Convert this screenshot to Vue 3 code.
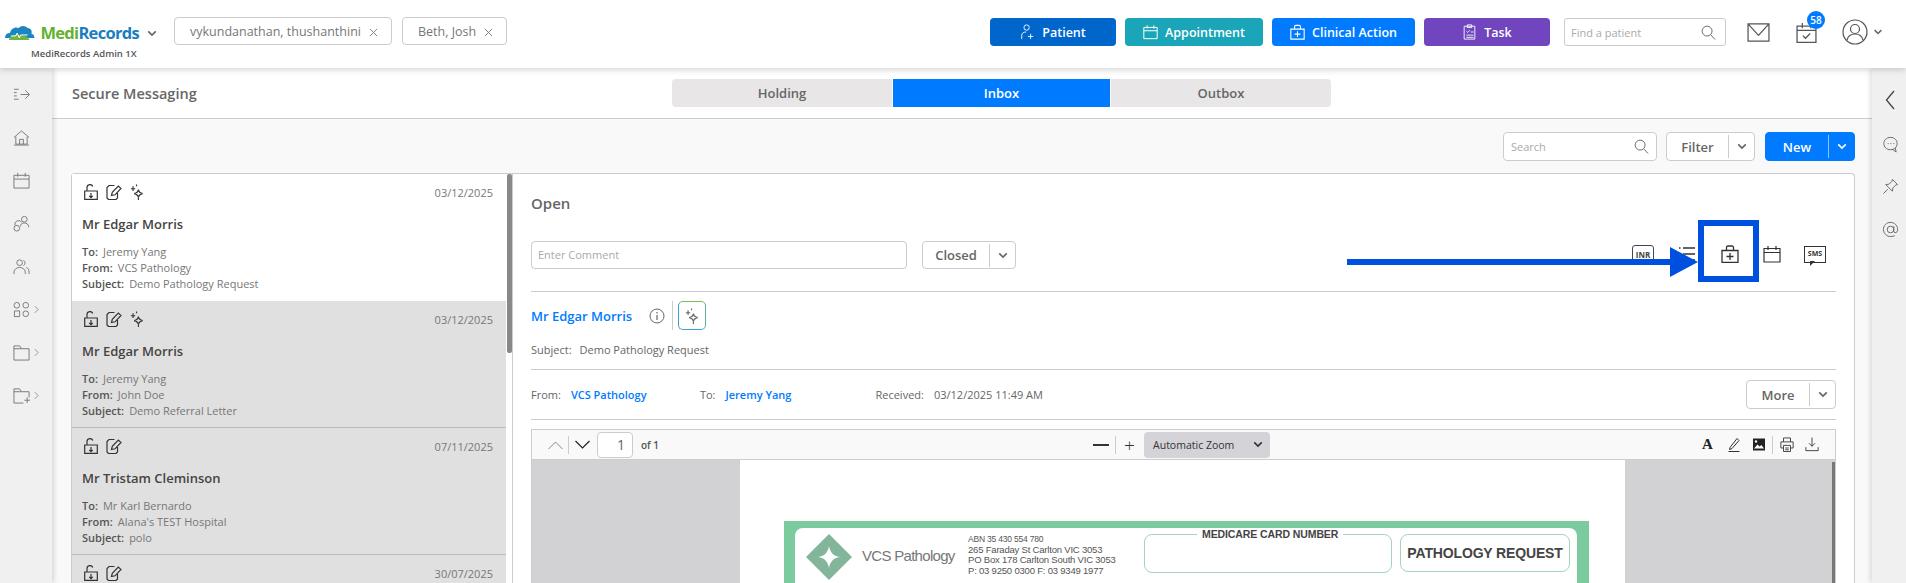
<template>
  <div class="page">
    <!-- shared icons -->
    <svg class="sprite" width="0" height="0">
      <symbol id="i-lock" viewBox="0 0 14 16">
        <path d="M.7 7h12.600v8.300H.7zM3 7V3.500a3 3 0 0 1 5.800-1M7 9v4.500M5.200 11.800 7 13.600l1.800-1.800" fill="none" stroke="currentColor" stroke-width="1.200" />
      </symbol>
      <symbol id="i-note" viewBox="0 0 16 16">
        <path d="M8.500 1.500H3L1 3.500v10.500l1.500 1.500h7.500l1.500-1.500V9M5.500 11.500l.8-3.200 6-6.300 2.700 2.500-6 6.300z" fill="none" stroke="currentColor" stroke-width="1.200" />
      </symbol>
      <symbol id="i-spark" viewBox="0 0 14 17">
        <path d="M8.500 6c.4 2.500 1.300 3.600 4.500 4.200-3.200.6-4.100 1.800-4.500 4.300-.4-2.500-1.300-3.700-4.500-4.300 3.200-.6 4.100-1.700 4.500-4.200zM2.800 2.500v5M.5 5h4.600M6.500 .5v2M8.500 15v2" fill="none" stroke="currentColor" stroke-width="1.200" />
      </symbol>
      <symbol id="i-chev" viewBox="0 0 12 8">
        <path d="M1.500 1.500 6 6l4.500-4.500" fill="none" stroke="currentColor" stroke-width="2" />
      </symbol>
      <symbol id="i-search" viewBox="0 0 16 16">
        <circle cx="6.500" cy="6.500" r="5.300" fill="none" stroke="currentColor" />
        <path d="m10.500 10.500 4.500 5" fill="none" stroke="currentColor" />
      </symbol>
      <symbol id="i-cal" viewBox="0 0 18 18">
        <path d="M1 3.500h16v13.500H1zM1 7.500h16M5 1v4M13 1v4" fill="none" stroke="currentColor" stroke-width="1.200" />
      </symbol>
      <symbol id="i-case" viewBox="0 0 18 18">
        <path d="M1 5.500h16v12H1zM5.500 5.500V2.500a1.500 1.500 0 0 1 1.500-1.500h4a1.500 1.500 0 0 1 1.500 1.500v3M9 8v7M5.500 11.500h7" fill="none" stroke="currentColor" stroke-width="1.300" />
      </symbol>
      <symbol id="i-caret" viewBox="0 0 6 10">
        <path d="m1 1 4 4-4 4" fill="none" stroke="currentColor" />
      </symbol>
    </svg>

    <header class="topbar">
      <div class="brand">
        <div class="logo">
          <svg class="cloud" viewBox="0 0 32 20">
            <path d="M1 15c0-3 2-5 5-5 1-4 5-7 9-5 2-3 7-3 9 0 3 0 5 3 4 6 2 0 3 2 3 4z" fill="#1c86c2" />
            <path d="M5 17c1-4 6-6 10-5 5 0 9 1 11 5z" fill="#6fb544" />
            <path d="M7 13h5l1.500-3 2 5 1.500-3h7" fill="none" stroke="#fff" />
          </svg>
          <span class="logo-text"><b class="medi">Medi</b><b class="records">Records</b></span>
        </div>
        <div class="logo-sub">MediRecords Admin 1X</div>
      </div>
      <svg class="brand-chev"><use href="#i-chev" /></svg>

      <div v-for="c in chips" :key="c" class="chip">
        {{ c }}
        <svg class="chip-x" viewBox="0 0 10 10"><path d="m1 1 8 8M9 1 1 9" stroke="#777" /></svg>
      </div>

      <div class="top-right">
        <button class="act patient">
          <svg class="act-ico" viewBox="0 0 16 18"><circle cx="7" cy="4" r="3" fill="none" stroke="#fff" /><path d="M1.500 17v-4.500c0-2 2-3.500 5-3.500M11.500 11v6M8.500 14h6" fill="none" stroke="#fff" /></svg>
          Patient
        </button>
        <button class="act appt">
          <svg class="act-ico"><use href="#i-cal" /></svg>
          Appointment
        </button>
        <button class="act clinical">
          <svg class="act-ico"><use href="#i-case" /></svg>
          Clinical Action
        </button>
        <button class="act task">
          <svg class="act-ico" viewBox="0 0 14 18"><path d="M1 2.500h12V17H1zM4.500 1h5v3h-5zM3.500 8l1.500 1.500L7.500 7M8.500 9h3M3.500 12.500h8M3.500 15h8" fill="none" stroke="#fff" /></svg>
          Task
        </button>
        <div class="find">
          <span>Find a patient</span>
          <svg class="find-ico"><use href="#i-search" /></svg>
        </div>
        <svg class="mail" viewBox="0 0 24 20"><path d="M1 1h22v18H1zM1 1l11 12L23 1" fill="none" stroke="#555" stroke-width="1.300" /></svg>
        <div class="tasks">
          <svg class="tasks-ico" viewBox="0 0 20 20"><path d="M1 4h18v15.500H1zM1 8h18M6 1v5M14 1v5M6.500 13l2.500 2.500 4.500-4.500" fill="none" stroke="#555" stroke-width="1.200" /></svg>
          <span class="badge">58</span>
        </div>
        <svg class="user" viewBox="0 0 26 26"><circle cx="13" cy="13" r="12" fill="none" stroke="#555" stroke-width="1.200" /><circle cx="13" cy="10" r="4.500" fill="none" stroke="#555" stroke-width="1.200" /><path d="M5 21c1-4 4-6 8-6s7 2 8 6" fill="none" stroke="#555" stroke-width="1.200" /></svg>
        <svg class="user-chev"><use href="#i-chev" /></svg>
      </div>
    </header>

    <div class="body">
      <nav class="rail">
        <div v-for="n in railIcons" :key="n.d" class="rail-item">
          <svg class="rail-ico" viewBox="0 0 18 18"><path :d="n.d" fill="none" stroke="#777" /></svg>
          <svg v-if="n.more" class="rail-more"><use href="#i-caret" /></svg>
        </div>
      </nav>

      <main class="main">
        <div class="titlebar">
          <h1 class="title">Secure Messaging</h1>
          <div class="tabs">
            <div class="tab">Holding</div>
            <div class="tab on">Inbox</div>
            <div class="tab">Outbox</div>
          </div>
        </div>

        <div class="tools">
          <div class="search">
            <span>Search</span>
            <svg class="find-ico"><use href="#i-search" /></svg>
          </div>
          <div class="split filter">
            <span class="split-label">Filter</span>
            <span class="split-arrow"><svg><use href="#i-chev" /></svg></span>
          </div>
          <div class="split new">
            <span class="split-label">New</span>
            <span class="split-arrow"><svg><use href="#i-chev" /></svg></span>
          </div>
        </div>

        <section class="panel">
          <div class="list">
            <div class="scroll-thumb"></div>
            <article v-for="(m, i) in messages" :key="i" class="msg" :class="{ sel: i === 0 }">
              <div class="msg-top">
                <svg class="mi lock"><use href="#i-lock" /></svg>
                <svg class="mi note"><use href="#i-note" /></svg>
                <svg v-if="m.ai" class="mi spark"><use href="#i-spark" /></svg>
                <span class="msg-date">{{ m.date }}</span>
              </div>
              <template v-if="m.name">
                <div class="msg-name">{{ m.name }}</div>
                <div class="msg-lines">
                  <div><b>To:</b>{{ m.to }}</div>
                  <div><b>From:</b>{{ m.from }}</div>
                  <div><b>Subject:</b>{{ m.subject }}</div>
                </div>
              </template>
            </article>
          </div>

          <div class="detail">
            <div class="open">Open</div>
            <div class="comment-row">
              <div class="comment">Enter Comment</div>
              <div class="split closed">
                <span class="split-label">Closed</span>
                <span class="split-arrow"><svg><use href="#i-chev" /></svg></span>
              </div>
              <div class="row-icons">
                <span class="inr">INR</span>
                <svg class="ri list-ico" viewBox="0 0 18 18"><path d="M1 3h1.500M5 3h12M1 9h1.500M5 9h12M1 15h1.500M5 15h12" stroke="#333" stroke-width="1.500" /></svg>
                <svg class="ri case-ico"><use href="#i-case" /></svg>
                <svg class="ri cal-ico"><use href="#i-cal" /></svg>
                <span class="sms">SMS</span>
              </div>
            </div>

            <div class="who">
              <a class="patient-link">Mr Edgar Morris</a>
              <svg class="info" viewBox="0 0 16 16"><circle cx="8" cy="8" r="7" fill="none" stroke="#666" /><path d="M8 7v5M8 4v1.500" stroke="#666" stroke-width="1.200" /></svg>
              <span class="who-sep"></span>
              <span class="ai-btn"><svg><use href="#i-spark" /></svg></span>
            </div>
            <div class="subject"><span>Subject:</span>Demo Pathology Request</div>

            <div class="meta">
              <span class="meta-l">From:</span><a class="meta-a from">VCS Pathology</a>
              <span class="meta-l">To:</span><a class="meta-a to">Jeremy Yang</a>
              <span class="meta-l">Received:</span><span class="meta-v">03/12/2025 11:49 AM</span>
              <div class="split more">
                <span class="split-label">More</span>
                <span class="split-arrow"><svg><use href="#i-chev" /></svg></span>
              </div>
            </div>

            <div class="viewer">
              <div class="vbar">
                <svg class="v-nav up" viewBox="0 0 16 10"><path d="m1 9 7-7 7 7" fill="none" stroke="#888" /></svg>
                <span class="v-sep"></span>
                <svg class="v-nav" viewBox="0 0 16 10"><path d="m1 1 7 7 7-7" fill="none" stroke="#222" stroke-width="1.200" /></svg>
                <span class="v-page">1</span>
                <span class="v-of">of 1</span>
                <span class="v-minus"></span>
                <span class="v-sep"></span>
                <span class="v-plus">+</span>
                <div class="v-zoom">Automatic Zoom<svg><use href="#i-chev" /></svg></div>
                <div class="v-right">
                  <span class="v-a">A</span>
                  <svg class="v-i pencil" viewBox="0 0 14 16"><path d="M3 11 10 2l2 2-7 8-2.500 1zM1.500 15h11" fill="none" stroke="#333" /></svg>
                  <svg class="v-i image" viewBox="0 0 14 14"><path d="M1 1h12v12H1z" fill="#222" /><path d="m2 11 3.500-4 2 2 2-1.500L12 11z" fill="#fff" /><circle cx="4" cy="4" r="1.200" fill="#fff" /></svg>
                  <span class="v-sep"></span>
                  <svg class="v-i print" viewBox="0 0 16 18"><path d="M4 6V1.500h8V6M1 6h14v7h-3M4 13H1V6M4 10h8v7H4zM6 13h4M6 15h4" fill="none" stroke="#333" /></svg>
                  <svg class="v-i save" viewBox="0 0 16 18"><path d="M8 1v10M4.500 7.500 8 11l3.500-3.500M1 12v4h14v-4" fill="none" stroke="#333" /></svg>
                </div>
              </div>
              <div class="vbody">
                <div class="pdf-page">
                  <div class="form">
                    <div class="form-in">
                      <svg class="diamond" viewBox="0 0 46 46"><path fill-rule="evenodd" d="M23 0l23 23-23 23L0 23zM23 12c1 6 4 10 11 11-7 1-10 5-11 11-1-6-4-10-11-11 7-1 10-5 11-11z" fill="#82b59a" /></svg>
                      <div class="vcs">VCS Pathology</div>
                      <div class="addr">
                        <div class="abn">ABN 35 430 554 780</div>
                        <div>265 Faraday St Carlton VIC 3053</div>
                        <div>PO Box 178 Carlton South VIC 3053</div>
                        <div>P: 03 9250 0300 F: 03 9349 1977</div>
                      </div>
                      <div class="medicare"><span>MEDICARE CARD NUMBER</span></div>
                      <div class="req">PATHOLOGY REQUEST</div>
                    </div>
                  </div>
                </div>
                <div class="v-thumb"></div>
              </div>
            </div>
          </div>

          <!-- annotation drawn over the screenshot -->
          <div class="mark-line"></div>
          <div class="mark-head"></div>
          <div class="mark-box"></div>
        </section>
      </main>

      <aside class="rail-right">
        <svg class="rr-back" viewBox="0 0 10 20"><path d="M9 1 1.500 10 9 19" fill="none" stroke="#444" stroke-width="1.300" /></svg>
        <svg class="rr" viewBox="0 0 18 18"><path d="M9 1.500c4.500 0 7 3 7 6.500s-2.500 6.500-7 6.500c-4.500 0-7-3-7-6.500s2.500-6.500 7-6.500zM11 14l4 3-1-4.500" fill="none" stroke="#666" /><path d="M6 8h1M9 8h1M12 8h1" stroke="#666" /></svg>
        <svg class="rr" viewBox="0 0 18 18"><path d="m11 1.500 5.500 5.500-2 .5-3 3-.5 3.500-7-7 3.500-.5 3-3zM6 12l-4.500 4.500" fill="none" stroke="#666" /></svg>
        <svg class="rr" viewBox="0 0 18 18"><circle cx="9" cy="9" r="3.500" fill="none" stroke="#666" /><path d="M12.500 5.500V11c0 2 3.500 2 4-1 .5-5-3-8.500-7.500-8.500S1.500 5 1.500 9s3.500 7.500 7.500 7.500c2 0 3.500-.5 4.500-1" fill="none" stroke="#666" /></svg>
      </aside>
    </div>
  </div>
</template>

<script setup>
const chips = ['vykundanathan, thushanthini', 'Beth, Josh'];

const railIcons = [
  { d: 'M1 3.500h5M1 7h3M1 10.500h3M1 14h5M8 9h9M13 4.500 17.500 9 13 13.500' },
  { d: 'M1 9 9 2l8 7M3 8v8h12V8M7 16v-5h4v5M1 17h16' },
  { d: 'M1 3.500h16V17H1zM1 7.500h16M5 1v4M13 1v4' },
  { d: 'M9 4.500a3 3 0 1 0 6 0 3 3 0 1 0-6 0M2 11a4 4 0 0 1 7-3.500M16.500 13v-1c0-2-2-3.500-4.500-3.500S8 9.500 8 12M1 14a3 3 0 1 0 6 0 3 3 0 1 0-6 0' },
  { d: 'M4 5a3 3 0 1 0 6 0 3 3 0 1 0-6 0M1 17v-2c0-3 3-5 6-5s6 2 6 5v2M11 2.500a3 3 0 0 1 0 5.500M14 10c2 .8 3 2.500 3 5v2' },
  { d: 'M1 4.500a3 3 0 1 0 6 0 3 3 0 1 0-6 0M10.500 4.500a3 3 0 1 0 6 0 3 3 0 1 0-6 0M1.500 10.500h5.500v6H1.500zM10.500 13.500a3 3 0 1 0 6 0 3 3 0 1 0-6 0', more: true },
  { d: 'M1 2h6l2 3h8v12H1zM1 5h8', more: true },
  { d: 'M1 2h6l2 3h8v6M11 17H1V2M1 5h8M12 14h6M15 11v6', more: true },
];

// the fourth row is cut by the window, only its icons and date are in view
const messages = [
  { date: '03/12/2025', name: 'Mr Edgar Morris', to: 'Jeremy Yang', from: 'VCS Pathology', subject: 'Demo Pathology Request', ai: true },
  { date: '03/12/2025', name: 'Mr Edgar Morris', to: 'Jeremy Yang', from: 'John Doe', subject: 'Demo Referral Letter', ai: true },
  { date: '07/11/2025', name: 'Mr Tristam Cleminson', to: 'Mr Karl Bernardo', from: "Alana's TEST Hospital", subject: 'polo' },
  { date: '30/07/2025' },
];
</script>

<style>
html,
body {
  margin: 0;
  overflow: hidden;
  background: #fff;
}
</style>

<style scoped>
* {
  box-sizing: border-box;
}

.page {
  height: 583px;
  width: 1906px;
  display: flex;
  flex-direction: column;
  overflow: hidden;
  font-family: 'Open Sans', 'Noto Sans', sans-serif;
  color: #666;
}

.sprite {
  position: absolute;
}

/* top bar */
.topbar {
  height: 68px;
  flex: none;
  display: flex;
  align-items: flex-start;
  padding-left: 4px;
  background: #fff;
  box-shadow: 0 2px 6px rgba(0, 0, 0, 0.16);
  position: relative;
  z-index: 3;
}

.brand {
  width: 135px;
  margin-top: 22px;
}

.logo {
  display: flex;
  align-items: center;
}

.cloud {
  width: 33px;
  height: 20px;
  margin-right: 5px;
}

.logo-text {
  font-size: 16.5px;
  letter-spacing: -0.7px;
  line-height: 22px;
}

.medi {
  color: #62b22f;
}

.records {
  color: #1b7ec0;
}

.logo-sub {
  font-size: 9.5px;
  font-weight: 600;
  line-height: 12px;
  margin: 4px 0 0 27px;
  white-space: nowrap;
  color: #555;
}

.brand-chev {
  width: 10px;
  height: 7px;
  margin: 30px 17px 0 8px;
  color: #666;
}

.chip {
  height: 28px;
  margin: 17px 10px 0 0;
  display: flex;
  align-items: center;
  padding: 0 13px 0 15px;
  border: 1px solid #ccc;
  border-radius: 4px;
  font-size: 12.5px;
  color: #777;
  white-space: nowrap;
}

.chip-x {
  width: 9px;
  height: 9px;
  margin-left: 8px;
  margin-top: 2px;
}

.top-right {
  margin: 18px 0 0 auto;
  display: flex;
  align-items: center;
}

.act {
  height: 28px;
  border: 0;
  border-radius: 4px;
  margin-right: 9px;
  display: flex;
  align-items: center;
  justify-content: center;
  gap: 7px;
  padding: 0;
  font: 600 12.5px 'Open Sans', sans-serif;
  color: #fff;
}

.act-ico {
  width: 15px;
  height: 16px;
  color: #fff;
}

.patient {
  width: 126px;
  background: #0066cc;
}

.appt {
  width: 138px;
  background: #1aa5b8;
}

.clinical {
  width: 143px;
  background: #007bff;
}

.task {
  width: 126px;
  background: #7045bd;
  margin-right: 14px;
}

.find {
  width: 162px;
  height: 28px;
  border: 1px solid #ccc;
  border-radius: 3px;
  display: flex;
  align-items: center;
  justify-content: space-between;
  padding: 0 9px 0 6px;
  font-size: 11px;
  color: #aaa;
}

.find-ico {
  width: 15px;
  height: 15px;
  color: #666;
}

.mail {
  width: 23px;
  height: 19px;
  margin-left: 21px;
}

.tasks {
  position: relative;
  margin-left: 26px;
  height: 20px;
}

.tasks-ico {
  width: 21px;
  height: 21px;
  display: block;
}

.badge {
  position: absolute;
  left: 11px;
  top: -11px;
  width: 18px;
  height: 18px;
  border-radius: 50%;
  background: #007bff;
  color: #fff;
  font-size: 10px;
  font-weight: 600;
  line-height: 18px;
  text-align: center;
}

.user {
  width: 26px;
  height: 26px;
  margin-left: 25px;
}

.user-chev {
  width: 10px;
  height: 6px;
  margin: 0 23px 0 5px;
  color: #666;
}

/* layout */
.body {
  flex: 1;
  min-height: 0;
  display: flex;
}

.rail {
  width: 52px;
  flex: none;
  padding-top: 5px;
  background: #f0f0f0;
  box-shadow: 2px 0 5px rgba(0, 0, 0, 0.14);
  position: relative;
  z-index: 2;
}

.rail-item {
  height: 43px;
  display: flex;
  align-items: center;
  padding-left: 13px;
}

.rail-ico {
  width: 17px;
  height: 17px;
}

.rail-more {
  width: 5px;
  height: 9px;
  margin-left: 4px;
  color: #888;
}

.main {
  flex: 1;
  min-width: 0;
  display: flex;
  flex-direction: column;
  background: #f9f9f9;
}

.titlebar {
  height: 51px;
  flex: none;
  background: #fff;
  border-bottom: 1px solid #ccc;
  display: flex;
  align-items: center;
  padding-left: 20px;
  position: relative;
}

.title {
  margin: 0;
  width: 600px;
  font-size: 14.5px;
  font-weight: 600;
  color: #666;
}

.tabs {
  display: flex;
  gap: 1px;
}

.tab {
  width: 220px;
  height: 28px;
  background: #e8e6e6;
  font-size: 13px;
  font-weight: 600;
  line-height: 28px;
  text-align: center;
  color: #666;
}

.tab:first-child {
  border-radius: 4px 0 0 4px;
}

.tab:last-child {
  border-radius: 0 4px 4px 0;
}

.tab.on {
  width: 217px;
  background: #007bff;
  color: #fff;
}

.tools {
  height: 54px;
  flex: none;
  display: flex;
  justify-content: flex-end;
  align-items: flex-start;
  gap: 9px;
  padding: 13px 17px 0 0;
}

.search {
  width: 154px;
  height: 29px;
  background: #fff;
  border: 1px solid #ccc;
  border-radius: 4px;
  display: flex;
  align-items: center;
  justify-content: space-between;
  padding: 0 7px;
  font-size: 11px;
  color: #aaa;
}

.split {
  height: 29px;
  display: flex;
  align-items: center;
  border: 1px solid #ccc;
  border-radius: 4px;
  background: #fff;
  font-size: 13px;
  font-weight: 600;
  color: #666;
}

.split-label {
  flex: 1;
  text-align: center;
}

.split-arrow {
  width: 26px;
  height: 23px;
  border-left: 1px solid #ccc;
  display: flex;
  align-items: center;
  justify-content: center;
}

.split-arrow svg {
  width: 10px;
  height: 7px;
}

.filter {
  width: 89px;
}

.new {
  width: 90px;
  margin-left: 1px;
  background: #007bff;
  border-color: #007bff;
  color: #fff;
}

.new .split-arrow {
  border-left-color: #8fc4ff;
}

/* message panel */
.panel {
  flex: 1;
  min-height: 0;
  margin: 0 17px 0 19px;
  display: flex;
  background: #fff;
  border: 1px solid #ccc;
  border-bottom: 0;
  border-radius: 4px 4px 0 0;
  position: relative;
}

.list {
  width: 441px;
  flex: none;
  border-right: 1px solid #ccc;
  padding-right: 6px;
  position: relative;
  overflow: hidden;
}

.scroll-thumb {
  position: absolute;
  right: 0;
  top: 0;
  width: 5px;
  height: 179px;
  background: #888;
  border-radius: 2px;
}

.msg {
  height: 127px;
  padding: 10px 13px 8px 10px;
  background: #e0e0e0;
  border-bottom: 1px solid #bbb;
}

.msg.sel {
  background: #fff;
  border-bottom: 0;
}

.msg-top {
  height: 16px;
  display: flex;
  align-items: center;
  color: #333;
}

.mi {
  height: 16px;
  flex: none;
}

.lock {
  width: 14px;
  margin-left: 2px;
}

.note {
  width: 16px;
  margin-left: 8px;
}

.spark {
  width: 14px;
  margin-left: 8px;
}

.msg-date {
  margin-left: auto;
  font-size: 11px;
  color: #777;
}

.msg-name {
  margin-top: 15px;
  font-size: 13px;
  font-weight: 600;
  line-height: 18px;
  color: #444;
}

.msg-lines {
  margin-top: 11px;
  font-size: 11px;
  line-height: 16px;
  color: #777;
}

.msg-lines b {
  font-weight: 600;
  color: #555;
  margin-right: 5px;
}

.detail {
  flex: 1;
  min-width: 0;
  padding: 0 18px;
  display: flex;
  flex-direction: column;
}

.open {
  margin-top: 19px;
  font-size: 15px;
  font-weight: 600;
  line-height: 20px;
  color: #666;
}

.comment-row {
  margin-top: 28px;
  padding-bottom: 22px;
  border-bottom: 1px solid #ccc;
  display: flex;
  align-items: center;
}

.comment {
  width: 376px;
  height: 28px;
  border: 1px solid #ccc;
  border-radius: 4px;
  padding-left: 6px;
  font-size: 11px;
  line-height: 26px;
  color: #aaa;
}

.closed {
  width: 94px;
  height: 28px;
  margin-left: 15px;
}

.row-icons {
  margin-left: auto;
  display: flex;
  align-items: center;
  margin-right: 10px;
  margin-top: -2px;
}

.ri {
  height: 18px;
  width: 18px;
}

.inr {
  width: 22px;
  height: 18px;
  border: 1px solid #445;
  border-radius: 3px;
  font-size: 8px;
  font-weight: 700;
  line-height: 17px;
  text-align: center;
  color: #444;
}

.list-ico {
  margin-left: 24px;
}

.case-ico {
  margin-left: 25px;
  color: #333;
}

.cal-ico {
  margin-left: 24px;
  color: #333;
}

.sms {
  width: 22px;
  height: 17px;
  margin-left: 23px;
  border: 1.5px solid #333;
  font-size: 7px;
  font-weight: 700;
  line-height: 14px;
  text-align: center;
  color: #333;
  position: relative;
}

/* speech bubble tail */
.sms::after {
  content: '';
  position: absolute;
  left: 5px;
  top: 14px;
  width: 0;
  height: 0;
  border-style: solid;
  border-width: 5px 5px 0 0;
  border-color: #333 transparent transparent transparent;
}

.who {
  height: 29px;
  margin-top: 9px;
  display: flex;
  align-items: center;
}

.patient-link {
  width: 118px;
  font-size: 13px;
  font-weight: 600;
  color: #007bff;
}

.info {
  width: 16px;
  height: 16px;
}

.who-sep {
  width: 1px;
  height: 29px;
  margin: 0 5px 0 7px;
  background: #ccc;
}

.ai-btn {
  width: 28px;
  height: 29px;
  border: 1px solid #3a9fb0;
  border-color: #7fbf5a #5fb08a #3f9fd0 #3f9fd0;
  border-radius: 5px;
  display: flex;
  align-items: center;
  justify-content: center;
  color: #666;
}

.ai-btn svg {
  width: 14px;
  height: 16px;
}

.subject {
  margin-top: 12px;
  padding-bottom: 11px;
  border-bottom: 1px solid #ccc;
  font-size: 11px;
  line-height: 16px;
  color: #666;
}

.subject span {
  margin-right: 8px;
}

.meta {
  height: 50px;
  display: flex;
  align-items: center;
  border-bottom: 1px solid #ccc;
  font-size: 11px;
  color: #666;
}

.meta-l {
  margin-right: 10px;
}

.meta-a {
  font-weight: 600;
  color: #007bff;
}

.from {
  width: 129px;
}

.to {
  width: 150px;
}

.more {
  width: 90px;
  margin-left: auto;
  margin-top: 0;
}

/* pdf viewer */
.viewer {
  flex: 1;
  min-height: 0;
  margin-top: 9px;
  border: 1px solid #ccc;
  border-bottom: 0;
  display: flex;
  flex-direction: column;
}

.vbar {
  height: 30px;
  flex: none;
  display: flex;
  align-items: center;
  padding-left: 15px;
  background: #f9f9f9;
  border-bottom: 1px solid #ccc;
}

.v-nav {
  width: 17px;
  height: 10px;
}

.v-nav.up {
  margin-right: 4px;
}

.v-sep {
  width: 1px;
  height: 18px;
  background: #ccc;
}

.v-sep + .v-nav {
  margin-left: 5px;
}

.v-page {
  width: 36px;
  height: 26px;
  margin-left: 6px;
  background: #fff;
  border: 1px solid #ccc;
  border-radius: 4px;
  padding-right: 7px;
  font-size: 14px;
  line-height: 24px;
  text-align: right;
  color: #666;
}

.v-of {
  margin-left: 8px;
  font-size: 10px;
  font-weight: 600;
  color: #555;
}

.v-minus {
  width: 16px;
  height: 2px;
  margin: 0 6px 0 434px;
  background: #333;
}

.v-plus {
  width: 27px;
  font-size: 19px;
  font-weight: 300;
  line-height: 20px;
  text-align: center;
  color: #333;
}

.v-zoom {
  width: 126px;
  height: 26px;
  background: #d4d4d8;
  border-radius: 4px;
  padding: 0 7px 0 9px;
  margin-left: 1px;
  display: flex;
  align-items: center;
  justify-content: space-between;
  font-size: 10.5px;
  color: #333;
}

.v-zoom svg {
  width: 10px;
  height: 7px;
  color: #333;
}

.v-right {
  margin-left: auto;
  padding-right: 16px;
  display: flex;
  align-items: center;
}

.v-a {
  width: 10px;
  font: 700 15px 'Liberation Serif', serif;
  color: #222;
}

.v-i {
  width: 14px;
  height: 17px;
}

.pencil {
  margin-left: 15px;
}

.image {
  margin: 0 6px 0 11px;
}

.print {
  margin-left: 7px;
}

.save {
  margin-left: 11px;
}

.vbody {
  flex: 1;
  min-height: 0;
  background: #d2d2d4;
  padding-left: 208px;
  position: relative;
  overflow: hidden;
}

.pdf-page {
  width: 885px;
  height: 100%;
  background: #fff;
  padding: 61px 36px 0 44px;
}

.form {
  height: 100%;
  padding: 7px 12px 0 11px;
  background: #7ccb9f;
}

.form-in {
  height: 100%;
  background: #fff;
  border-radius: 8px 8px 0 0;
  display: flex;
  align-items: flex-start;
  padding: 6px 7px 0 11px;
}

.diamond {
  width: 46px;
  height: 46px;
  flex: none;
}

.vcs {
  margin: 13px 0 0 10px;
  width: 106px;
  font-size: 15px;
  letter-spacing: -0.7px;
  font-family: 'Liberation Sans', sans-serif;
  color: #777;
  white-space: nowrap;
}

.addr {
  width: 176px;
  font: 9.5px/10.500px 'Liberation Sans', sans-serif;
  letter-spacing: -0.2px;
  color: #555;
  white-space: nowrap;
}

.abn {
  font-size: 8.5px;
}

.medicare {
  width: 248px;
  height: 39px;
  border: 1px solid #a6d3c0;
  border-radius: 8px;
  position: relative;
}

.medicare span {
  position: absolute;
  left: 52px;
  top: -7px;
  padding: 0 5px;
  background: #fff;
  font: 700 10.500px 'Liberation Sans', sans-serif;
  letter-spacing: -0.1px;
  color: #444;
  white-space: nowrap;
}

.req {
  width: 170px;
  height: 38px;
  margin-left: 8px;
  border: 1px solid #a6d3c0;
  border-radius: 8px;
  font: 700 14px/36px 'Liberation Sans', sans-serif;
  letter-spacing: -0.15px;
  text-align: center;
  color: #444;
}

.v-thumb {
  position: absolute;
  right: 0;
  top: 2px;
  bottom: 0;
  width: 3px;
  background: #777;
}

/* blue arrow and box pointing at the clinical action icon */
.mark-line {
  position: absolute;
  left: 1275px;
  top: 85px;
  width: 325px;
  height: 6px;
  background: #0050e0;
}

.mark-head {
  position: absolute;
  left: 1598px;
  top: 73px;
  width: 0;
  height: 0;
  border-style: solid;
  border-width: 15px 0 15px 28px;
  border-color: transparent transparent transparent #0050e0;
}

.mark-box {
  position: absolute;
  left: 1626px;
  top: 46px;
  width: 61px;
  height: 62px;
  border: 6px solid #0050e0;
}

.rail-right {
  width: 34px;
  flex: none;
  background: #f0f0f0;
  box-shadow: -2px 0 5px rgba(0, 0, 0, 0.12);
  display: flex;
  flex-direction: column;
  align-items: center;
  padding: 22px 0 0 2px;
  gap: 25.5px;
  position: relative;
  z-index: 1;
}

.rr-back {
  width: 10px;
  height: 20px;
}

.rr {
  width: 17px;
  height: 17px;
}
</style>
